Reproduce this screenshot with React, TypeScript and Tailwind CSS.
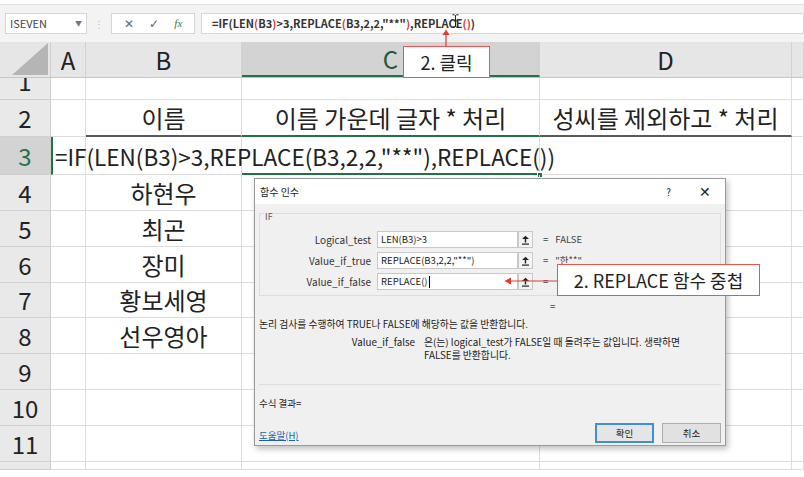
import React from 'react'

const kr = { fontFamily: '"Noto Sans CJK KR", "Noto Sans", sans-serif' }
const ui = { fontFamily: '"Noto Sans CJK KR", "Noto Sans", "Liberation Sans", sans-serif' }

const cols = [
  { key: 'A', w: 'w-[35px]' },
  { key: 'B', w: 'w-[156px]' },
  { key: 'C', w: 'w-[298px]' },
  { key: 'D', w: 'w-[252px]' },
  { key: 'E', w: 'flex-1' },
]

const rowHeights: Record<number, string> = {
  1: 'h-[22px]',
  2: 'h-[37px]',
  3: 'h-[38px]',
  4: 'h-[36px]',
  5: 'h-[36px]',
  6: 'h-[36px]',
  7: 'h-[35px]',
  8: 'h-[36px]',
  9: 'h-[36px]',
  10: 'h-[36px]',
  11: 'h-[36px]',
  12: 'h-[8px]',
}

const names: Record<number, string> = { 4: '하현우', 5: '최곤', 6: '장미', 7: '황보세영', 8: '선우영아' }

function FormulaBar() {
  return (
    <div className="h-[38px] bg-[#f3f3f3] border-t border-[#e2e2e2] flex items-center">
      <div className="ml-[5px] w-[82px] h-[21px] bg-white border border-[#d6d6d6] flex items-center justify-between px-[4px] text-[11px] text-[#444]" style={ui}>
        <span>ISEVEN</span>
        <span className="text-[7px] text-[#777]">▼</span>
      </div>
      <div className="w-[24px] flex justify-center text-[#bbb] text-[10px] leading-none">⋮</div>
      <div className="w-[84px] h-[21px] bg-white border border-[#d6d6d6] flex items-center justify-around px-1 text-[12px] text-[#666]">
        <span>✕</span>
        <span>✓</span>
        <span className="italic text-[11px] text-[#3a7a3a]" style={{ fontFamily: '"Liberation Serif", serif' }}>fx</span>
      </div>
      <div className="ml-[6px] flex-1 h-[21px] bg-white border border-[#d6d6d6] flex items-center pl-[10px] text-[11px] font-bold text-[#333]" style={ui}>
        <span>=IF(LEN</span>
        <span className="text-[#d63b3b]">(</span>
        <span>B3</span>
        <span className="text-[#d63b3b]">)</span>
        <span>&gt;3,REPLACE</span>
        <span className="text-[#d63b3b]">(</span>
        <span>B3,2,2,"**"</span>
        <span className="text-[#d63b3b]">)</span>
        <span>,REPLACE</span>
        <span className="text-[#d63b3b]">()</span>
        <span>)</span>
      </div>
    </div>
  )
}

function HeaderRow() {
  return (
    <div className="flex h-[36px] bg-[#e6e6e6] border-b border-[#c6c6c6]" style={kr}>
      <div className="w-[51px] border-r border-[#cfcfcf] flex items-end justify-end pr-[2px] pb-[2px]">
        <svg width="36" height="32" viewBox="0 0 36 32">
          <polygon points="36,0 36,32 0,32" fill="#b5b5b5" />
        </svg>
      </div>
      {cols.map(c => (
        <div
          key={c.key}
          className={`${c.w} border-r border-[#d2d2d2] flex items-center justify-center text-[24px] ${
            c.key === 'C' ? 'bg-[#d3d3d3] border-b-2 border-b-[#217346] text-[#1e5a38]' : 'text-[#222]'
          }`}
        >
          {c.key === 'E' ? '' : c.key}
        </div>
      ))}
    </div>
  )
}

function Row({ n }: { n: number }) {
  const h = rowHeights[n]
  const sel = n === 3
  return (
    <div className={`flex ${h} relative overflow-visible`} style={kr}>
      <div
        className={`w-[51px] shrink-0 border-r border-b border-[#cfcfcf] flex justify-center overflow-hidden text-[24px] leading-none ${
          sel ? 'bg-[#d3d3d3] text-[#217346]' : 'bg-[#e9e9e9] text-[#222]'
        } ${n === 1 ? 'items-end' : n === 12 ? 'items-start' : 'items-center'}`}
      >
        <span className={n === 1 ? 'mb-[6px]' : n === 12 ? 'mt-[2px]' : ''}>{n}</span>
      </div>
      {cols.map(c => {
        let cls = 'border-r border-b border-[#dcdcdc]'
        if (n === 2 && (c.key === 'B' || c.key === 'D')) cls = 'border-r border-[#dcdcdc] border-b-2 border-b-[#5a5a5a]'
        if (n === 2 && c.key === 'C') cls = 'border-r border-[#dcdcdc] border-b-2 border-b-[#217346]'
        if (n === 3 && c.key === 'A') cls = 'border-r border-b border-[#dcdcdc] border-l-2 border-l-[#217346]'
        if (n === 3 && c.key === 'C') cls = 'border-r border-[#dcdcdc] border-b-2 border-b-[#217346]'
        let content: React.ReactNode = null
        if (n === 2 && c.key === 'B') content = '이름'
        if (n === 2 && c.key === 'C') content = '이름 가운데 글자 * 처리'
        if (n === 2 && c.key === 'D') content = '성씨를 제외하고 * 처리'
        if (c.key === 'B' && names[n]) content = names[n]
        return (
          <div key={c.key} className={`${c.w} shrink-0 ${cls} flex items-center justify-center whitespace-nowrap text-[24px] text-[#222] leading-none`}>
            {content}
          </div>
        )
      })}
      {sel && (
        <div className="absolute left-[55px] top-0 h-full flex items-center text-[22.5px] text-[#222] whitespace-nowrap leading-none">
          =IF(LEN(B3)&gt;3,REPLACE(B3,2,2,"**"),REPLACE())
        </div>
      )}
      {sel && <div className="absolute left-[537px] bottom-[-3px] w-[6px] h-[6px] bg-[#217346] border border-white" />}
    </div>
  )
}

function ArgRow({ label, value, result, cursor }: { label: string; value: string; result?: string; cursor?: boolean }) {
  return (
    <div className="flex items-center h-[21px]">
      <div className="w-[117px] text-right pr-[6px] text-[10px] text-[#333]">{label}</div>
      <div className="w-[141px] h-[17px] bg-white border border-[#c8c8c8] flex items-center px-[3px] text-[9.5px] text-[#222]">
        {value}
        {cursor && <span className="inline-block w-px h-[12px] bg-black ml-px" />}
      </div>
      <div className="w-[15px] h-[17px] border border-[#c8c8c8] bg-[#f4f4f4] flex items-center justify-center">
        <svg width="9" height="10" viewBox="0 0 9 10">
          <path d="M1 4 L4.5 0.8 L8 4 Z" fill="#222" />
          <rect x="3.8" y="3.5" width="1.4" height="4" fill="#222" />
          <rect x="1" y="8.5" width="7" height="1.2" fill="#222" />
        </svg>
      </div>
      <div className="ml-[10px] text-[9.5px] text-[#444]">=</div>
      {result && <div className="ml-[7px] text-[9.5px] text-[#444]">{result}</div>}
    </div>
  )
}

function Dialog() {
  return (
    <div className="absolute left-[254px] top-[178px] w-[472px] h-[268px] bg-[#f0f0f0] border border-[#9a9a9a] shadow-[2px_3px_6px_rgba(0,0,0,0.25)] flex flex-col" style={ui}>
      <div className="h-[25px] bg-white flex items-center pl-[5px] text-[10px] text-[#222] shrink-0">
        <span>함수 인수</span>
        <span className="ml-auto mr-[28px] text-[10px]">?</span>
        <span className="mr-[14px] text-[14px] font-light">✕</span>
      </div>
      <div className="mx-[4px] mt-[9px] h-[83px] border border-[#dcdcdc] relative pt-[15px] shrink-0">
        <span className="absolute left-[4px] top-[-2px] bg-[#f0f0f0] px-px text-[9px] text-[#555] leading-none">IF</span>
        <ArgRow label="Logical_test" value="LEN(B3)>3" result="FALSE" />
        <ArgRow label="Value_if_true" value={'REPLACE(B3,2,2,"**")'} result={'"한**"'} />
        <ArgRow label="Value_if_false" value="REPLACE()" cursor />
      </div>
      <div className="ml-[295px] mt-[6px] text-[9.5px] text-[#444] leading-none">=</div>
      <div className="ml-[4px] mt-[5px] text-[9.8px] text-[#222]">논리 검사를 수행하여 TRUE나 FALSE에 해당하는 값을 반환합니다.</div>
      <div className="flex mt-[5px] text-[9.8px] text-[#222] leading-[13px]">
        <div className="w-[169px] text-right pr-[9px]">Value_if_false</div>
        <div>
          은(는) logical_test가 FALSE일 때 돌려주는 값입니다. 생략하면
          <br />
          FALSE를 반환합니다.
        </div>
      </div>
      <div className="mx-[4px] mt-[22px] border-t border-[#dcdcdc]" />
      <div className="ml-[4px] mt-[11px] text-[9.5px] text-[#222]">수식 결과=</div>
      <div className="flex items-end mx-[4px] mt-[13px]">
        <span className="text-[9.5px] text-[#1a5fb4] underline mb-[1px]">도움말(H)</span>
        <div className="ml-auto w-[59px] h-[20px] border-2 border-[#3d8fd6] bg-[#e5e5e5] flex items-center justify-center text-[9.5px] text-[#222]">확인</div>
        <div className="ml-[8px] w-[59px] h-[20px] border border-[#adadad] bg-[#e1e1e1] flex items-center justify-center text-[9.5px] text-[#222]">취소</div>
      </div>
    </div>
  )
}

export default function App() {
  return (
    <div className="w-[804px] h-[477px] bg-white relative overflow-hidden">
      <div className="h-[4px] bg-white" />
      <FormulaBar />
      <HeaderRow />
      {[1, 2, 3, 4, 5, 6, 7, 8, 9, 10, 11, 12].map(n => (
        <Row key={n} n={n} />
      ))}

      <Dialog />

      {/* I-beam cursor in formula bar */}
      <svg className="absolute left-[452px] top-[14px]" width="7" height="14" viewBox="0 0 7 14">
        <path d="M0.5 0.8 H2.5 L3.5 1.8 L4.5 0.8 H6.5 M3.5 1.8 V12.2 M0.5 13.2 H2.5 L3.5 12.2 L4.5 13.2 H6.5 M1.8 7 H5.2" stroke="#222" strokeWidth="1" fill="none" />
      </svg>

      {/* 2. 클릭 callout */}
      <svg className="absolute left-[440px] top-[29px]" width="12" height="19" viewBox="0 0 12 19">
        <line x1="6" y1="4" x2="6" y2="19" stroke="#e53935" strokeWidth="1.2" />
        <path d="M2.5 6 L6 0.5 L9.5 6 Z" fill="#e53935" />
      </svg>
      <div className="absolute left-[403px] top-[46px] w-[87px] h-[32px] bg-white border-[1.5px] border-[#ef5350] flex items-center justify-center text-[18px] text-[#222]" style={kr}>
        2. 클릭
      </div>

      {/* 2. REPLACE 함수 중첩 callout */}
      <svg className="absolute left-[504px] top-[276px]" width="54" height="10" viewBox="0 0 54 10">
        <line x1="5" y1="5" x2="54" y2="5" stroke="#e53935" strokeWidth="1.2" />
        <path d="M0.5 5 L7 1.5 L7 8.5 Z" fill="#e53935" />
      </svg>
      <div className="absolute left-[557px] top-[264px] w-[203px] h-[32px] bg-white border-[1.5px] border-[#ef5350] flex items-center justify-center text-[18px] text-[#222]" style={kr}>
        2. REPLACE 함수 중첩
      </div>
    </div>
  )
}
